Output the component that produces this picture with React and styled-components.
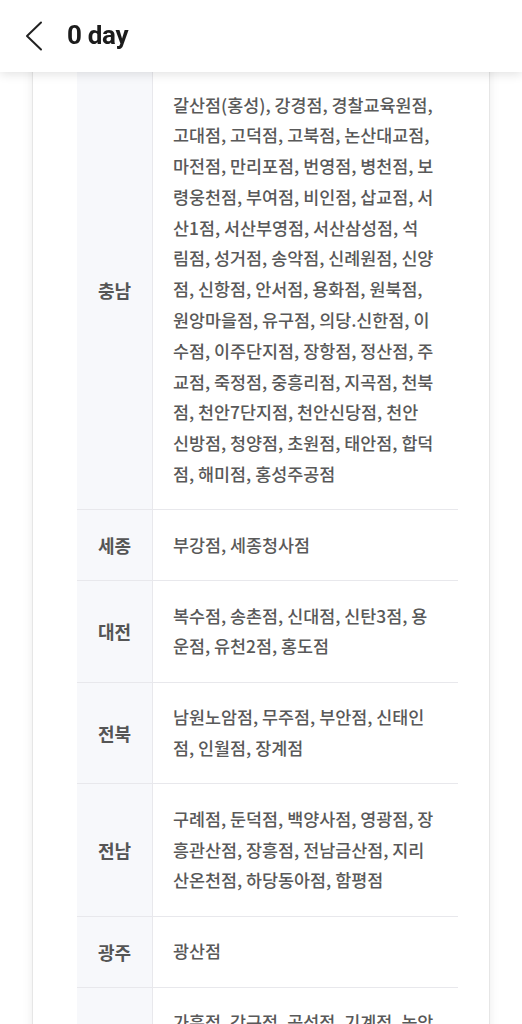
import React from "react";
import styled, { createGlobalStyle } from "styled-components";

const Global = createGlobalStyle`
  html, body { margin: 0; padding: 0; background: #ffffff; }
  body { font-family: "Noto Sans CJK KR", "Noto Sans", sans-serif; -webkit-font-smoothing: antialiased; }
  * { box-sizing: border-box; }
`;

const Header = styled.header`
  position: fixed;
  top: 0; left: 0; right: 0;
  height: 72px;
  background: #ffffff;
  display: flex;
  align-items: center;
  gap: 21px;
  padding: 0 0 0 22px;
  box-shadow: 0 2px 10px rgba(0, 0, 0, 0.12);
  z-index: 10;
`;

const BackButton = styled.button`
  border: 0;
  background: none;
  padding: 0;
  width: 24px;
  height: 32px;
  display: flex;
  align-items: center;
  justify-content: center;
  color: #222;
`;

const Title = styled.h1`
  margin: 0;
  font-family: Roboto, "Noto Sans", sans-serif;
  font-weight: 700;
  font-size: 26px;
  letter-spacing: -0.3px;
  color: #1c1c1c;
  line-height: 1;
  padding-bottom: 2px;
`;

const Page = styled.main`
  padding: 0 32px;
`;

const Card = styled.section`
  background: #ffffff;
  border-left: 1px solid #e6e6e6;
  border-right: 1px solid #e6e6e6;
  box-shadow: 0 0 10px rgba(0, 0, 0, 0.08);
  padding: 70px 31px 40px 44px;
  min-height: 1100px;
`;

const Table = styled.div`
  display: grid;
  grid-template-columns: 76px 1fr;
`;

const Label = styled.div`
  background: #f7f8fb;
  border-right: 1px solid #e8e8ec;
  border-bottom: ${p => (p.$last ? "none" : "1px solid #e8e8ec")};
  display: flex;
  align-items: center;
  justify-content: center;
  font-weight: 700;
  font-size: 18px;
  color: #555555;
`;

const Cell = styled.div`
  border-bottom: ${p => (p.$last ? "none" : "1px solid #e8e8ec")};
  padding: 19.5px 12px 19.5px 20px;
  font-size: 17.4px;
  line-height: 30.8px;
  color: #595959;
  font-weight: 500;
  white-space: pre-line;
`;

const Chevron = () => (
  <svg width="20" height="30" viewBox="0 0 20 30" fill="none">
    <path d="M17 1.5 L3 15 L17 28.5" stroke="#222" strokeWidth="2" strokeLinecap="round" strokeLinejoin="round" />
  </svg>
);

const rows = [
  {
    region: "충남",
    lines: [
      "갈산점(홍성), 강경점, 경찰교육원점,",
      "고대점, 고덕점, 고북점, 논산대교점,",
      "마전점, 만리포점, 번영점, 병천점, 보",
      "령웅천점, 부여점, 비인점, 삽교점, 서",
      "산1점, 서산부영점, 서산삼성점, 석",
      "림점, 성거점, 송악점, 신례원점, 신양",
      "점, 신항점, 안서점, 용화점, 원북점,",
      "원앙마을점, 유구점, 의당.신한점, 이",
      "수점, 이주단지점, 장항점, 정산점, 주",
      "교점, 죽정점, 중흥리점, 지곡점, 천북",
      "점, 천안7단지점, 천안신당점, 천안",
      "신방점, 청양점, 초원점, 태안점, 합덕",
      "점, 해미점, 홍성주공점",
    ],
  },
  { region: "세종", lines: ["부강점, 세종청사점"] },
  { region: "대전", lines: ["복수점, 송촌점, 신대점, 신탄3점, 용", "운점, 유천2점, 홍도점"] },
  { region: "전북", lines: ["남원노암점, 무주점, 부안점, 신태인", "점, 인월점, 장계점"] },
  {
    region: "전남",
    lines: ["구례점, 둔덕점, 백양사점, 영광점, 장", "흥관산점, 장흥점, 전남금산점, 지리", "산온천점, 하당동아점, 함평점"],
  },
  { region: "광주", lines: ["광산점"] },
  {
    region: "경북",
    lines: ["가흥점, 강구점, 공성점, 기계점, 농암", "점, 문경점, 봉화점, 상주점, 영덕점,", "예천점"],
  },
];

export default function App() {
  return (
    <>
      <Global />
      <Header>
        <BackButton aria-label="back">
          <Chevron />
        </BackButton>
        <Title>0 day</Title>
      </Header>
      <Page>
        <Card>
          <Table>
            {rows.map((r, i) => (
              <React.Fragment key={r.region}>
                <Label $last={i === rows.length - 1}>{r.region}</Label>
                <Cell $last={i === rows.length - 1}>{r.lines.join("\n")}</Cell>
              </React.Fragment>
            ))}
          </Table>
        </Card>
      </Page>
    </>
  );
}
